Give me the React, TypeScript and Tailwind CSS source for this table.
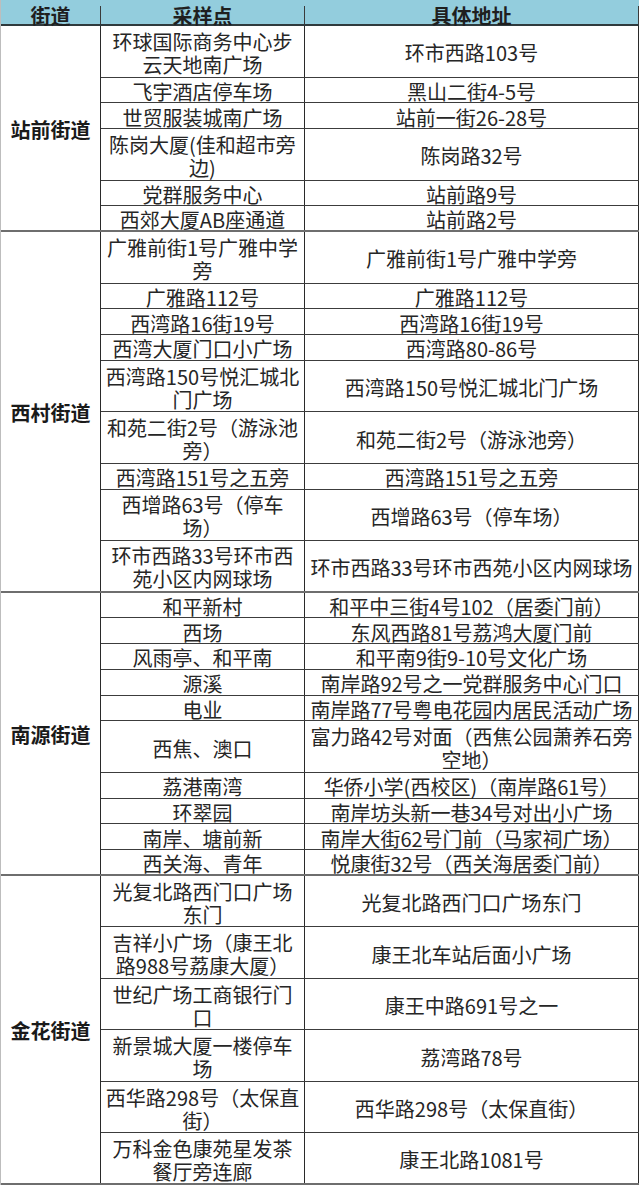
type Row = { site: string[]; addr: string[]; size: 1 | 2 };
type Group = { street: string; rows: Row[] };

const r = (site: string[], addr: string[], size: 1 | 2 = 1): Row => ({ site, addr, size });

const groups: Group[] = [
  {
    street: '站前街道',
    rows: [
      r(['环球国际商务中心步', '云天地南广场'], ['环市西路103号'], 2),
      r(['飞宇酒店停车场'], ['黑山二街4-5号']),
      r(['世贸服装城南广场'], ['站前一街26-28号']),
      r(['陈岗大厦(佳和超市旁', '边)'], ['陈岗路32号'], 2),
      r(['党群服务中心'], ['站前路9号']),
      r(['西郊大厦AB座通道'], ['站前路2号']),
    ],
  },
  {
    street: '西村街道',
    rows: [
      r(['广雅前街1号广雅中学', '旁'], ['广雅前街1号广雅中学旁'], 2),
      r(['广雅路112号'], ['广雅路112号']),
      r(['西湾路16街19号'], ['西湾路16街19号']),
      r(['西湾大厦门口小广场'], ['西湾路80-86号']),
      r(['西湾路150号悦汇城北', '门广场'], ['西湾路150号悦汇城北门广场'], 2),
      r(['和苑二街2号（游泳池', '旁）'], ['和苑二街2号（游泳池旁）'], 2),
      r(['西湾路151号之五旁'], ['西湾路151号之五旁']),
      r(['西增路63号（停车', '场）'], ['西增路63号（停车场）'], 2),
      r(['环市西路33号环市西', '苑小区内网球场'], ['环市西路33号环市西苑小区内网球场'], 2),
    ],
  },
  {
    street: '南源街道',
    rows: [
      r(['和平新村'], ['和平中三街4号102（居委门前）']),
      r(['西场'], ['东风西路81号荔鸿大厦门前']),
      r(['风雨亭、和平南'], ['和平南9街9-10号文化广场']),
      r(['源溪'], ['南岸路92号之一党群服务中心门口']),
      r(['电业'], ['南岸路77号粤电花园内居民活动广场']),
      r(['西焦、澳口'], ['富力路42号对面（西焦公园萧养石旁', '空地）'], 2),
      r(['荔港南湾'], ['华侨小学(西校区)（南岸路61号）']),
      r(['环翠园'], ['南岸坊头新一巷34号对出小广场']),
      r(['南岸、塘前新'], ['南岸大街62号门前（马家祠广场）']),
      r(['西关海、青年'], ['悦康街32号（西关海居委门前）']),
    ],
  },
  {
    street: '金花街道',
    rows: [
      r(['光复北路西门口广场', '东门'], ['光复北路西门口广场东门'], 2),
      r(['吉祥小广场（康王北', '路988号荔康大厦）'], ['康王北车站后面小广场'], 2),
      r(['世纪广场工商银行门', '口'], ['康王中路691号之一'], 2),
      r(['新景城大厦一楼停车', '场'], ['荔湾路78号'], 2),
      r(['西华路298号（太保直', '街）'], ['西华路298号（太保直街）'], 2),
      r(['万科金色康苑星发茶', '餐厅旁连廊'], ['康王北路1081号'], 2),
    ],
  },
];

const Lines = ({ lines }: { lines: string[] }) => (
  <div className="flex flex-col items-center">
    {lines.map((l) => (
      <span key={l} className="whitespace-nowrap">
        {l}
      </span>
    ))}
  </div>
);

export default function App() {
  return (
    <div className="w-[640px] bg-white font-['Noto_Sans_CJK_SC',sans-serif] text-[20px] leading-[23px] text-[#262626]">
      <div className="w-[639px] border-l border-[#bdbdbd]">
        {/* 表头 */}
        <div className="flex h-[26px] border-b-2 border-[#2f3a3d] bg-[#93cddd] pt-[6px] font-bold text-[#1f1f1f]">
          <div className="flex w-[100px] items-center justify-center border-r border-[#3a3a3a]">街道</div>
          <div className="flex w-[204px] items-center justify-center border-r border-[#3a3a3a]">采样点</div>
          <div className="flex w-[334px] items-center justify-center border-r border-[#3a3a3a]">具体地址</div>
        </div>

        {groups.map((g) => (
          <div key={g.street} className="flex border-b-2 border-[#6e6e6e]">
            <div className="flex w-[100px] shrink-0 items-center justify-center border-r border-[#2a2a2a] pt-[3px] font-bold text-[#1a1a1a]">
              {g.street}
            </div>
            <div className="flex flex-col">
              {g.rows.map((row, i) => {
                const last = i === g.rows.length - 1;
                const h = row.size === 2 ? (last ? 'h-[49.5px]' : 'h-[51.5px]') : last ? 'h-[23.75px]' : 'h-[25.75px]';
                return (
                  <div key={i} className={`flex ${h} ${last ? '' : 'border-b border-[#3c3c3c]'}`}>
                    <div className="flex w-[204px] items-center justify-center border-r border-[#2a2a2a] pt-[3px]">
                      <Lines lines={row.site} />
                    </div>
                    <div className="flex w-[334px] items-center justify-center border-r border-[#2a2a2a] pt-[3px]">
                      <Lines lines={row.addr} />
                    </div>
                  </div>
                );
              })}
            </div>
          </div>
        ))}
      </div>
    </div>
  );
}
